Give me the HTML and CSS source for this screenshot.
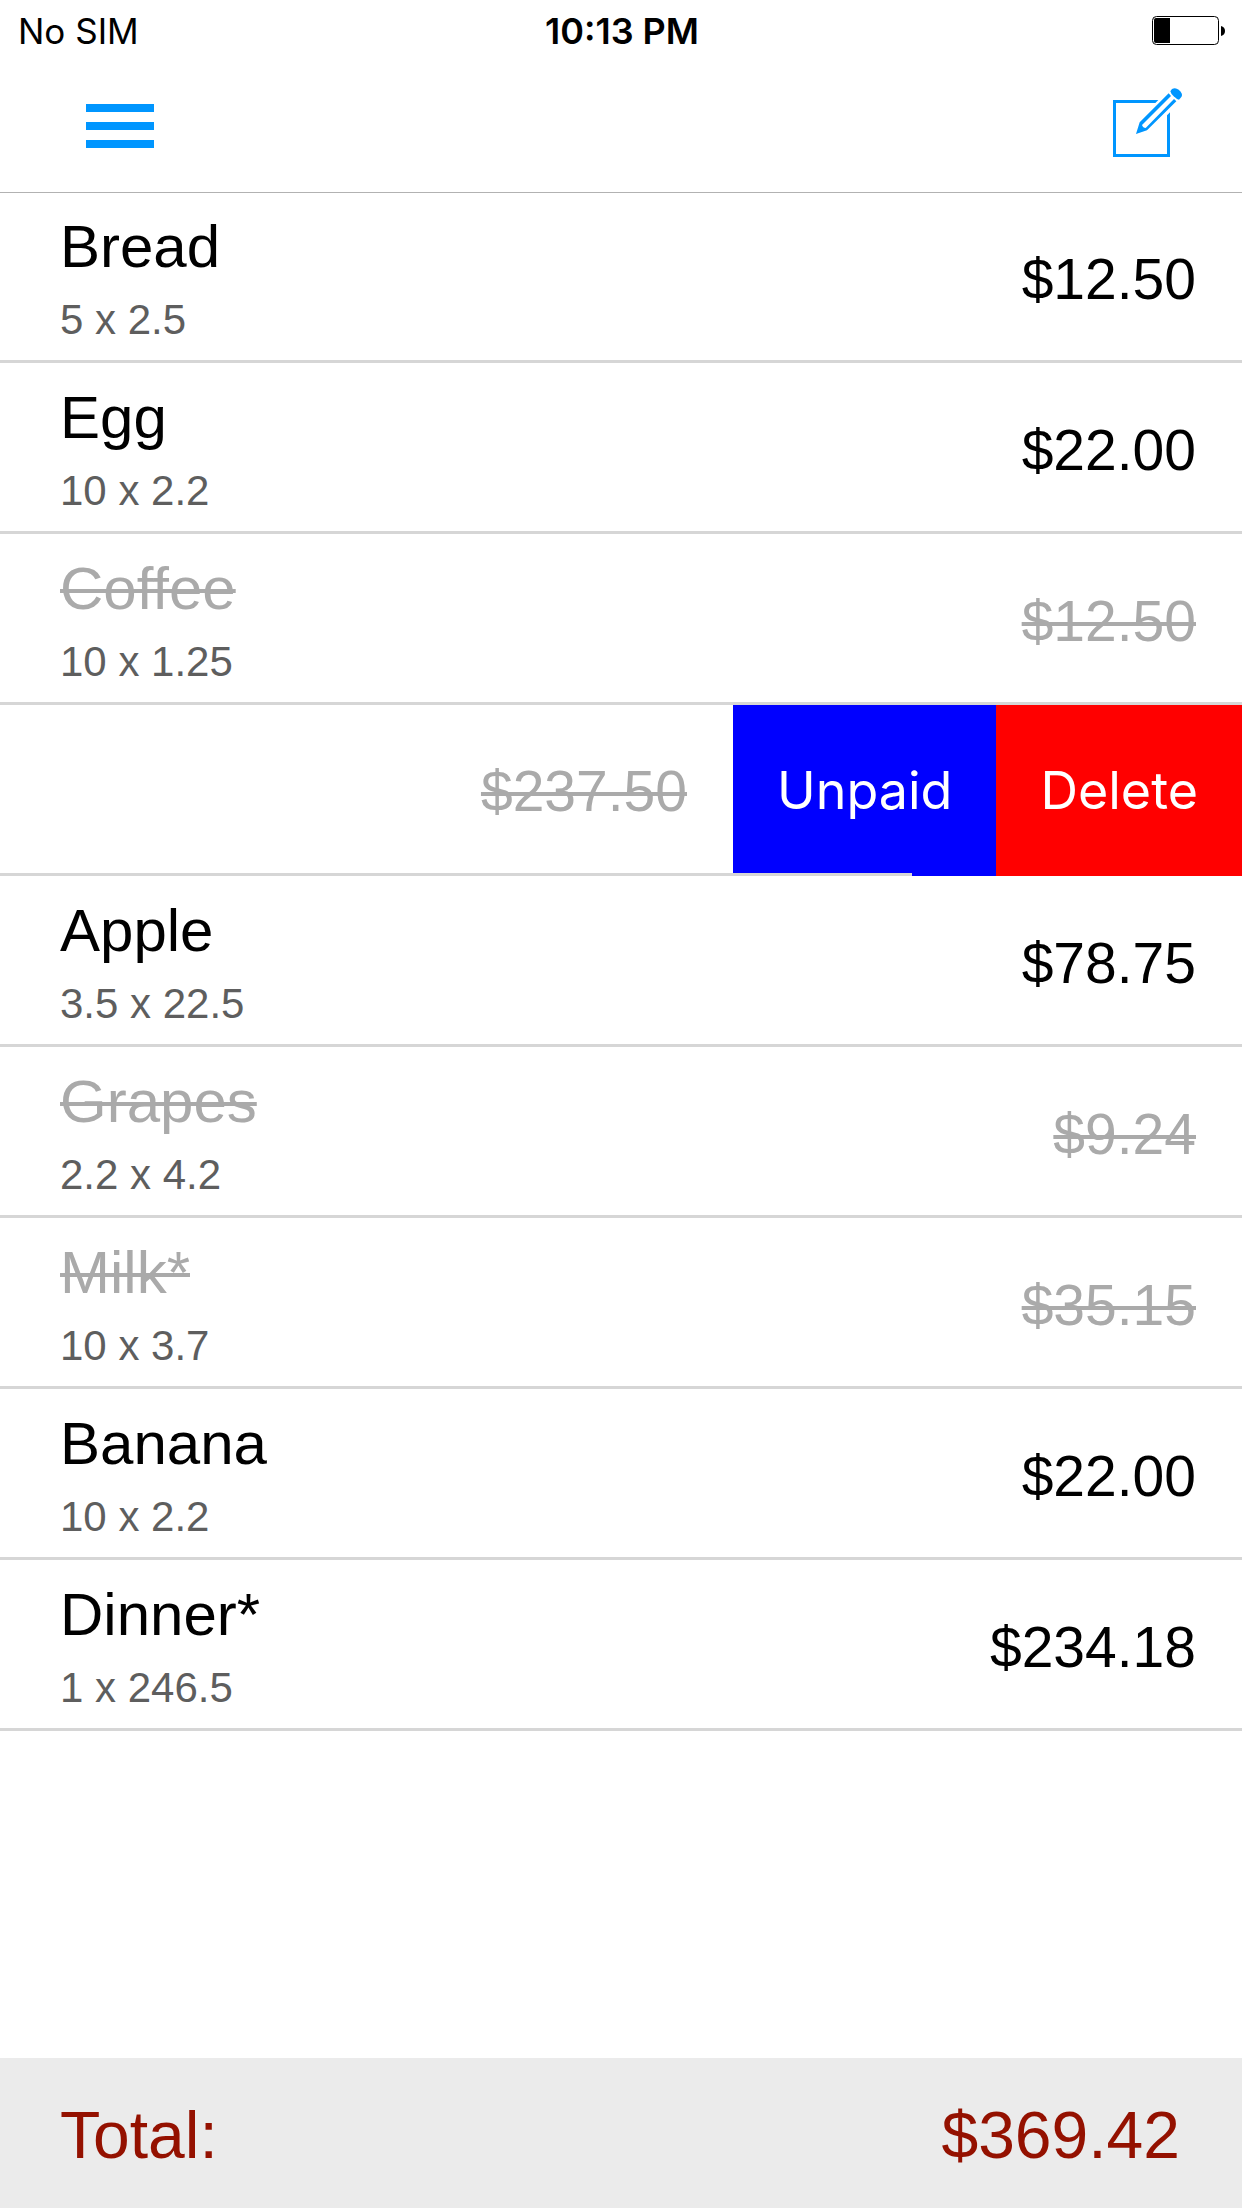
FILE: index.html
```
<!DOCTYPE html>
<html lang="en">
<head>
    <meta charset="UTF-8">
    <meta name="viewport" content="width=device-width, initial-scale=1.0">
    <title>Shopping List</title>
    <link rel="stylesheet" href="styles.css">
</head>
<body>

    <div class="container">

        <div class="status-bar">
            <span class="carrier">No SIM</span>
            <span class="time">10:13 PM</span>
            <svg class="battery" viewBox="0 0 74 30" aria-label="Battery">
                <rect x="0.5" y="0.5" width="66" height="28" rx="4" fill="#fff" stroke="#000"/>
                <path d="M4 2H18V27H4Q2 27 2 25V4Q2 2 4 2Z"/>
                <path d="M69 10Q73 11 73 15Q73 19 69 20Z"/>
            </svg>
        </div>

        <div class="header">
            <button class="icon-btn" aria-label="Menu">
                <svg class="menu-icon" viewBox="0 0 68 44">
                    <path d="M0 0H68V8H0ZM0 18H68V26H0ZM0 36H68V44H0Z"/>
                </svg>
            </button>
            <button class="icon-btn" aria-label="Add item">
                <svg class="edit-icon" viewBox="93 264 210 228">
                    <path d="M93 300H229L220 309H102V462H255V346L264 337V471H93Z"/>
                    <path d="M260 280L173 367L162 402L195 391L283 304L276 297L191 384Q183 384 180 375L267 288Z"/>
                    <path d="M265 274L270 267Q280 261 290 269L296 275Q303 284 298 291L291 299Q284 298 275 289Q266 280 265 274Z"/>
                </svg>
            </button>
        </div>

        <ul class="item-list">
            <li class="item">
                <div class="item-info">
                    <h2>Bread</h2>
                    <p>5 x 2.5</p>
                </div>
                <span class="price">$12.50</span>
            </li>
            <li class="item">
                <div class="item-info">
                    <h2>Egg</h2>
                    <p>10 x 2.2</p>
                </div>
                <span class="price">$22.00</span>
            </li>
            <li class="item paid">
                <div class="item-info">
                    <h2>Coffee</h2>
                    <p>10 x 1.25</p>
                </div>
                <span class="price">$12.50</span>
            </li>
            <!-- row swiped open -->
            <li class="item paid swiped">
                <span class="price">$237.50</span>
                <div class="actions">
                    <button class="unpaid-btn">Unpaid</button>
                    <button class="delete-btn">Delete</button>
                </div>
            </li>
            <li class="item">
                <div class="item-info">
                    <h2>Apple</h2>
                    <p>3.5 x 22.5</p>
                </div>
                <span class="price">$78.75</span>
            </li>
            <li class="item paid">
                <div class="item-info">
                    <h2>Grapes</h2>
                    <p>2.2 x 4.2</p>
                </div>
                <span class="price">$9.24</span>
            </li>
            <li class="item paid">
                <div class="item-info">
                    <h2>Milk*</h2>
                    <p>10 x 3.7</p>
                </div>
                <span class="price">$35.15</span>
            </li>
            <li class="item">
                <div class="item-info">
                    <h2>Banana</h2>
                    <p>10 x 2.2</p>
                </div>
                <span class="price">$22.00</span>
            </li>
            <li class="item">
                <div class="item-info">
                    <h2>Dinner*</h2>
                    <p>1 x 246.5</p>
                </div>
                <span class="price">$234.18</span>
            </li>
        </ul>

        <div class="total-bar">
            <span>Total:</span>
            <span>$369.42</span>
        </div>

    </div>

</body>
</html>
```
FILE: styles.css
```
:root {
    --accent: #0096ff;
    --line: #d6d6d6;
    --totalColor: #941100;
    --mainFont: "Liberation Sans", Arial, sans-serif;
    --systemFont: Inter, sans-serif;
}
* {
    box-sizing: border-box;
}
body {
    margin: 0;
    background-color: white;
    color: black;
    font-family: var(--mainFont);
}
button {
    border: none;
    cursor: pointer;
}
.container {
    min-height: 100vh;
    display: flex;
    flex-direction: column;
}
.status-bar {
    height: 60px;
    padding: 2px 16px 0 18px;
    display: grid;
    grid-template-columns: 1fr auto 1fr;
    align-items: center;
    font-family: var(--systemFont);
    font-size: 35px;
}
.time {
    font-size: 36px;
    font-weight: 600;
}
.battery {
    width: 74px;
    height: 30px;
    justify-self: end;
}
.header {
    height: 132px;
    padding: 0 59px 0 86px;
    display: flex;
    justify-content: space-between;
    align-items: center;
    box-shadow: 0 1px 0 #b2b2b2;
    position: relative;
}
.icon-btn {
    padding: 0;
    background: none;
    fill: var(--accent);
}
.icon-btn svg {
    display: block;
}
.menu-icon {
    width: 68px;
    height: 44px;
}
.edit-icon {
    width: 70px;
    height: 76px;
}
.item-list {
    flex: 1;
    margin: 0;
    padding: 0;
    list-style: none;
}
.item {
    min-height: 171px;
    padding: 25px 46px 19px 60px;
    display: flex;
    justify-content: space-between;
    align-items: center;
    border-bottom: 3px solid var(--line);
}
.item-info h2 {
    margin: 0 0 22px;
    font-size: 60px;
    line-height: 60px;
    font-weight: normal;
}
.item-info p {
    margin: 0;
    color: #5e5e5e;
    font-size: 42px;
    line-height: 42px;
}
.price {
    font-size: 57px;
    line-height: 60px;
}
.paid h2,
.paid .price {
    color: #aaa;
    text-decoration: line-through;
    text-decoration-thickness: 4px;
}
.swiped {
    padding: 0;
    border-bottom: none;
    justify-content: flex-end;
    align-items: stretch;
}
.swiped .price {
    flex: 1;
    padding: 56px 46px 52px 0;
    border-bottom: 3px solid var(--line);
    text-align: right;
}
.actions {
    display: flex;
}
.actions button {
    padding: 0 44px;
    color: white;
    font-family: var(--systemFont);
    font-size: 52px;
}
.unpaid-btn {
    /* the separator runs part of the way under the button */
    background: linear-gradient(var(--line), var(--line)) left bottom / 179px 3px no-repeat blue;
}
.delete-btn {
    background-color: red;
}
.total-bar {
    height: 150px;
    padding: 4px 62px 0 60px;
    display: flex;
    justify-content: space-between;
    align-items: center;
    background-color: #ebebeb;
    color: var(--totalColor);
    font-size: 66px;
}
```
